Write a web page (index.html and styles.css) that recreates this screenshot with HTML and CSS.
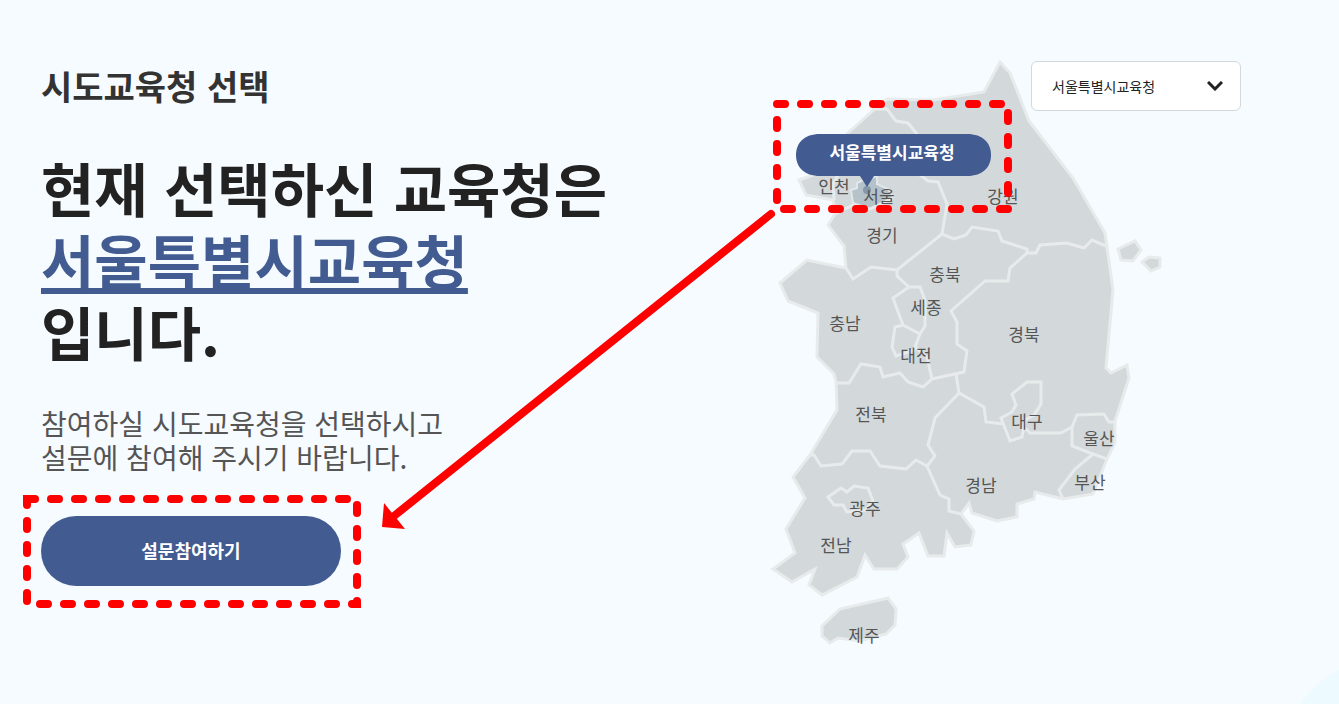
FILE: index.html
```html
<!DOCTYPE html>
<html lang="ko">
<head>
    <meta charset="UTF-8">
    <meta name="viewport" content="width=device-width, initial-scale=1.0">
    <title>시도교육청 선택</title>
    <link rel="stylesheet" href="styles.css">
</head>
<body>
    <main class="office">
        <section class="intro">
            <h1 class="title">시도교육청 선택</h1>
            <h2 class="current">현재 선택하신 교육청은<br><span class="name">서울특별시교육청</span><br>입니다.</h2>
            <p class="desc">참여하실 시도교육청을 선택하시고<br>설문에 참여해 주시기 바랍니다.</p>
            <button type="button" class="join">설문참여하기</button>
        </section>

        <section class="region">
            <svg class="map" viewBox="760 61 420 586" role="img" aria-label="시도 지도">
                <!-- 본토와 섬 -->
                <g class="land">
                    <path d="M1000 62L1010 73L1029 121L1073 178L1105 233L1107 247L1113 290L1106 368L1111 373L1127 365L1129 378L1115 421L1115 443L1107 459L1093 494L1063 499L1035 492L1034 499L1017 504V517L997 521L972 513L969 503L961 514L974 531L971 545L955 547L947 533L944 556H928L919 533L903 544L908 557L897 569H874L865 555L857 577L822 595L809 585L815 569L792 582L773 569L795 553L786 529L805 498L793 477L810 455L837 410L836 382L834 374L817 357L818 313L788 301L780 283L807 260L846 268L844 246L828 225L835 214L833 200L806 195L799 180L828 170L832 149L848 133L877 107L887 99L933 100L984 92Z"/>
                    <path d="M822 626L840 609L888 598L896 609L895 625L886 634L860 641L838 638L830 643L822 636Z"/>
                    <path d="M1118 249L1135 241L1141 250L1133 261L1121 260Z"/>
                    <path d="M1142 262L1149 257L1160 258V267L1151 271Z"/>
                </g>
                <!-- 시도 경계 -->
                <g class="border">
                    <path d="M872 109H887L896 121L908 123L917 134L920 175L928 181L938 182L947 204L942 234"/>
                    <path d="M846 268L853 279L871 267L897 270L942 234L954 239L966 235L972 227L998 231L1002 241L1027 249V253H1036L1040 245L1067 243L1084 248L1092 240L1106 246"/>
                    <path d="M1027 253L1010 268L1008 281H985L951 311L957 322V344L967 351L964 372L932 379L923 387L908 382L900 373L883 377L880 367L861 364L849 383H836"/>
                    <path d="M897 270V276L909 287H920L925 300V326L920 334L915 347L927 357L932 379"/>
                    <path d="M909 287L893 298L903 325L920 334M903 325L895 327L892 347L896 356L915 350"/>
                    <path d="M956 374L959 393L935 418L928 445L935 456L927 466L940 495L949 499V511L961 514"/>
                    <path d="M810 455H814L821 466L842 464L852 451H870L880 466L906 469L916 460L927 466"/>
                    <path d="M828 497L841 488L847 492L854 486L868 488L873 501L866 510L847 512L843 505H834Z"/>
                    <path d="M959 393L984 407L986 422L1004 424M1001 418L1012 412L1016 405L1012 394L1027 382H1041V404L1034 415L1025 420L1022 437L1010 441ZM1025 428L1030 433H1061L1072 427"/>
                    <path d="M1115 422H1109L1104 414L1077 415L1072 427V446L1093 454L1107 459M1093 454L1075 469L1059 490L1063 499"/>
                    <path d="M838 175L833 184L834 200"/>
                </g>
                <path class="seoul" d="M877 176V184L888 189L893 197L882 204L870 209L853 203L851 190L857 188V183L864 180Z"/>
                <path class="border" d="M835 214L853 205L870 209L893 198"/>
                <circle class="dot" cx="867" cy="190" r="4"/>
                <g class="label">
                    <text x="834" y="193">인천</text>
                    <text x="879" y="203">서울</text>
                    <text x="1003" y="203">강원</text>
                    <text x="882" y="242">경기</text>
                    <text x="945" y="281">충북</text>
                    <text x="926" y="314">세종</text>
                    <text x="845" y="330">충남</text>
                    <text x="916" y="362">대전</text>
                    <text x="1024" y="341">경북</text>
                    <text x="871" y="421">전북</text>
                    <text x="1027" y="428">대구</text>
                    <text x="1099" y="445">울산</text>
                    <text x="1090" y="489">부산</text>
                    <text x="981" y="492">경남</text>
                    <text x="865" y="515">광주</text>
                    <text x="836" y="552">전남</text>
                    <text x="864" y="642">제주</text>
                </g>
                <g class="bubble">
                    <path d="M820 134H967C983 134 991 143 991 155C991 167 983 176 967 176H874L867 187L860 176H820C804 176 796 167 796 155C796 143 804 134 820 134Z"/>
                    <text x="892" y="159">서울특별시교육청</text>
                </g>
            </svg>
            <div class="picker">
                <select class="select" aria-label="교육청 선택">
                    <option>서울특별시교육청</option>
                </select>
                <svg class="chevron" viewBox="0 0 16 10" aria-hidden="true"><path d="M1 1L8 8L15 1"/></svg>
            </div>
        </section>

        <!-- 안내 표시 -->
        <svg class="guide" viewBox="0 0 1339 704" aria-hidden="true">
            <path class="dash" d="M777 104H1008V209H777Z"/>
            <path class="dash" d="M27 499H357V604H27Z"/>
            <path class="line" d="M771 214L394 516"/>
            <path class="head" d="M382 527L384 503L392 513L397 519L405 529Z"/>
        </svg>
    </main>
</body>
</html>
```

FILE: styles.css
```css
* {
    box-sizing: border-box;
}

body {
    margin: 0;
    background: #f6fbff;
    color: #222;
    font-family: "Noto Sans CJK KR", sans-serif;
}

.office {
    position: relative;
    display: flex;
    min-height: 100vh;
    padding: 61px 98px 0 41px;
    overflow: hidden;
}

/* 오른쪽 아래 배경 원 */
.office::after {
    content: "";
    position: absolute;
    right: -145px;
    bottom: -155px;
    width: 200px;
    height: 200px;
    border-radius: 50%;
    background: #edfaff;
}

.intro {
    flex: 1;
}

.title {
    margin: 0 0 40px;
    color: #333;
    font-size: 34px;
    line-height: 50px;
}

.current {
    margin: 0 0 39px;
    font-size: 58px;
    line-height: 72px;
}

.name {
    color: #425b90;
    text-decoration: underline;
    text-decoration-thickness: 6px;
    text-decoration-skip-ink: none;
    text-underline-offset: 4px;
}

.desc {
    margin: 0 0 42px;
    color: #555;
    font-size: 28px;
    line-height: 34px;
}

.join {
    width: 300px;
    height: 70px;
    padding: 0 0 3px;
    border: none;
    border-radius: 35px;
    background: #425b90;
    color: #fff;
    font-family: inherit;
    font-size: 18px;
    font-weight: bold;
    cursor: pointer;
}

.region {
    position: relative;
    width: 481px;
}

.map {
    display: block;
    width: 420px;
    overflow: visible;
}

.land {
    fill: #d3d8da;
    stroke: #e8ebec;
    stroke-width: 3px;
}

.border {
    fill: none;
    stroke: #e8ebec;
    stroke-width: 3px;
}

.seoul {
    fill: #b6c2c9;
    stroke: #e0e6e9;
    stroke-width: 2px;
}

.dot {
    fill: #8297a9;
}

.label {
    fill: #555;
    font-size: 17px;
    text-anchor: middle;
}

.bubble {
    fill: #425b90;
}

.bubble text {
    fill: #fff;
    font-size: 17px;
    font-weight: bold;
    text-anchor: middle;
}

.picker {
    position: absolute;
    top: 0;
    right: 0;
}

.select {
    display: block;
    width: 210px;
    height: 50px;
    padding: 0 20px;
    border: 1px solid #d3d8da;
    border-radius: 6px;
    background: #fff;
    color: #222;
    font-family: inherit;
    font-size: 14px;
    appearance: none;
}

.chevron {
    position: absolute;
    top: 20px;
    right: 18px;
    width: 16px;
    fill: none;
    stroke: #222;
    stroke-width: 3px;
    pointer-events: none;
}

.guide {
    position: absolute;
    top: 0;
    left: 0;
    width: 1339px;
    pointer-events: none;
}

.dash {
    fill: none;
    stroke: #f00;
    stroke-width: 8px;
    stroke-linecap: round;
    stroke-dasharray: 8 16;
}

.line {
    stroke: #f00;
    stroke-width: 8px;
    stroke-linecap: round;
}

.head {
    fill: #f00;
}
```
